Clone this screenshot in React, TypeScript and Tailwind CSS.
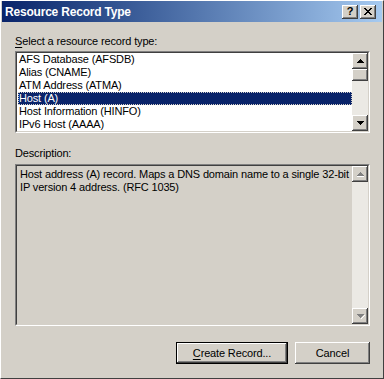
import React from "react";

const raised =
  "bg-[#d4d0c8] shadow-[inset_-1px_-1px_#404040,inset_1px_1px_#ffffff,inset_-2px_-2px_#808080,inset_2px_2px_#d4d0c8]";

const records = [
  "AFS Database (AFSDB)",
  "Alias (CNAME)",
  "ATM Address (ATMA)",
  "Host (A)",
  "Host Information (HINFO)",
  "IPv6 Host (AAAA)",
];

const Arrow = ({ up, disabled }: { up?: boolean; disabled?: boolean }) => (
  <svg width="8" height="5" viewBox="0 0 8 5">
    {disabled && (
      <path
        d={up ? "M0 4h7v1H0z" : "M4 4h1v-1h1v-1h1v-1h1v1H7v1H6v1H5v1H4z"}
        fill="#ffffff"
      />
    )}
    <path
      d={up ? "M3 0h1v1h1v1h1v1h1v1H0V3h1V2h1V1h1z" : "M0 0h7v1H6v1H5v1H4v1H3V3H2V2H1V1H0z"}
      fill={disabled ? "#808080" : "#000000"}
    />
  </svg>
);

const ScrollBtn = ({ up, disabled }: { up?: boolean; disabled?: boolean }) => (
  <div className={`w-[16px] h-[16px] flex items-center justify-center pl-[1px] ${raised}`}>
    <Arrow up={up} disabled={disabled} />
  </div>
);

const Sunken = ({ className, children }: { className: string; children: React.ReactNode }) => (
  <div className={`border border-t-[#808080] border-l-[#808080] border-r-white border-b-white ${className}`}>
    <div className="h-full border border-t-[#404040] border-l-[#404040] border-r-[#d4d0c8] border-b-[#d4d0c8] flex">
      {children}
    </div>
  </div>
);

export default function App() {
  return (
    <div
      className="w-[384px] h-[379px] bg-[#d4d0c8] flex flex-col border border-l-white border-t-white border-r-[#404040] border-b-[#404040] text-black text-[11px] tracking-[-0.15px]"
      style={{ fontFamily: '"Liberation Sans", Arial, sans-serif' }}
    >
      <div className="h-[21px] mx-[1px] flex items-center justify-between pl-[3px] pr-[6px] bg-gradient-to-r from-[#0a246a] to-[#a6caf0]">
        <span className="text-white font-bold text-[12px] tracking-[-0.2px]">Resource Record Type</span>
        <div className="flex gap-[2px]">
          <div className={`w-[16px] h-[14px] flex items-center justify-center font-bold text-[11px] leading-none pb-[1px] ${raised}`}>?</div>
          <div className={`w-[16px] h-[14px] flex items-center justify-center pb-[1px] ${raised}`}>
            <svg width="8" height="7" viewBox="0 0 8 7">
              <path d="M0 0h2v1h1v1h2V1h1V0h2v1H7v1H6v1H5v1h1v1h1v1h1v1H6V6H5V5H3v1H2v1H0V6h1V5h1V4h1V3H2V2H1V1H0z" fill="#000" />
            </svg>
          </div>
        </div>
      </div>

      <div className="flex flex-col pl-[14px] pr-[13px] pt-[12px]">
        <div className="leading-[14px] mb-[3px]">
          <span className="underline underline-offset-2">S</span>elect a resource record type:
        </div>
        <Sunken className="h-[82px]">
          <div className="flex-1 bg-white pl-[1px] pt-0">
            {records.map((r) => (
              <div
                key={r}
                className={`h-[13px] leading-[13px] pl-[1px] ${
                  r === "Host (A)" ? "bg-[#0a246a] text-white outline outline-1 outline-dotted outline-[#d4d0c8] -outline-offset-1" : ""
                }`}
              >
                {r}
              </div>
            ))}
          </div>
          <div className="w-[16px] flex flex-col bg-[#ebe9e4]">
            <ScrollBtn up />
            <div className={`h-[12px] w-[16px] ${raised}`} />
            <div className="flex-1" />
            <ScrollBtn />
          </div>
        </Sunken>

        <div className="leading-[14px] mt-[13px] mb-[4px]">Description:</div>
        <Sunken className="h-[162px]">
          <div className="flex-1 pl-[3px] pt-[2px] leading-[13px]">
            Host address (A) record. Maps a DNS domain name to a single 32-bit IP version 4 address. (RFC 1035)
          </div>
          <div className="w-[16px] flex flex-col bg-[#ebe9e4]">
            <ScrollBtn up disabled />
            <div className="flex-1" />
            <ScrollBtn disabled />
          </div>
        </Sunken>

        <div className="flex justify-end gap-[7px] mt-[16px]">
          <div className="border border-black">
            <div className={`w-[110px] h-[20px] flex items-center justify-center ${raised}`}>
              <span>
                <span className="underline underline-offset-2">C</span>reate Record...
              </span>
            </div>
          </div>
          <div className={`w-[75px] h-[22px] flex items-center justify-center ${raised}`}>Cancel</div>
        </div>
      </div>
    </div>
  );
}
